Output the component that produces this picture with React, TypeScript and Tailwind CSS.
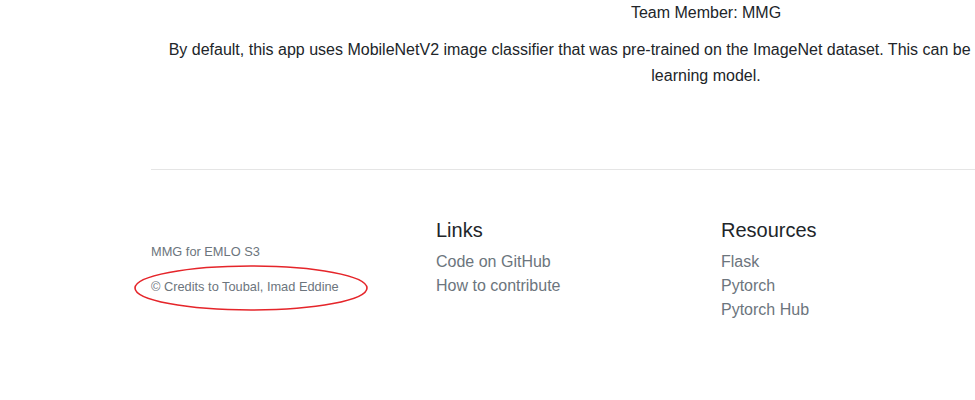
export default function App() {
  return (
    <div
      className="relative w-full h-[400px] overflow-hidden bg-white text-[#212529]"
      style={{ fontFamily: '"Liberation Sans", Arial, sans-serif' }}
    >
      <div className="ml-[136px] w-[1140px] px-[15px]">
        <div className="text-center text-base leading-[26px]">
          <p>Team Member: MMG</p>
          <p className="mt-[11px]">
            By default, this app uses MobileNetV2 image classifier that was pre-trained on the ImageNet dataset. This can
            be quickly replaced by any different deep learning model.
          </p>
        </div>

        <footer className="mt-[80px] border-t border-[#e5e5e5] pt-12">
          <div className="flex">
            <div className="w-[285px] pt-[24px]">
              <small className="block mb-4 text-[12.8px] leading-[19px] text-[#6c757d]">MMG for EMLO S3</small>
              <small className="block text-[12.8px] leading-[19px] text-[#6c757d]">
                © Credits to Toubal, Imad Eddine
              </small>
            </div>
            <div className="w-[285px]">
              <h5 className="mb-2 text-[20px] leading-6 font-medium">Links</h5>
              <ul className="text-base leading-6 text-[#6c757d]">
                <li>Code on GitHub</li>
                <li>How to contribute</li>
              </ul>
            </div>
            <div className="w-[285px]">
              <h5 className="mb-2 text-[20px] leading-6 font-medium">Resources</h5>
              <ul className="text-base leading-6 text-[#6c757d]">
                <li>Flask</li>
                <li>Pytorch</li>
                <li>Pytorch Hub</li>
              </ul>
            </div>
          </div>
        </footer>
      </div>

      {/* red ellipse annotation */}
      <svg className="absolute left-[130px] top-[262px]" width="245" height="54" viewBox="0 0 245 54">
        <ellipse cx="121" cy="26" rx="116" ry="22" fill="none" stroke="#e5252a" strokeWidth="1.6" />
      </svg>
    </div>
  );
}
